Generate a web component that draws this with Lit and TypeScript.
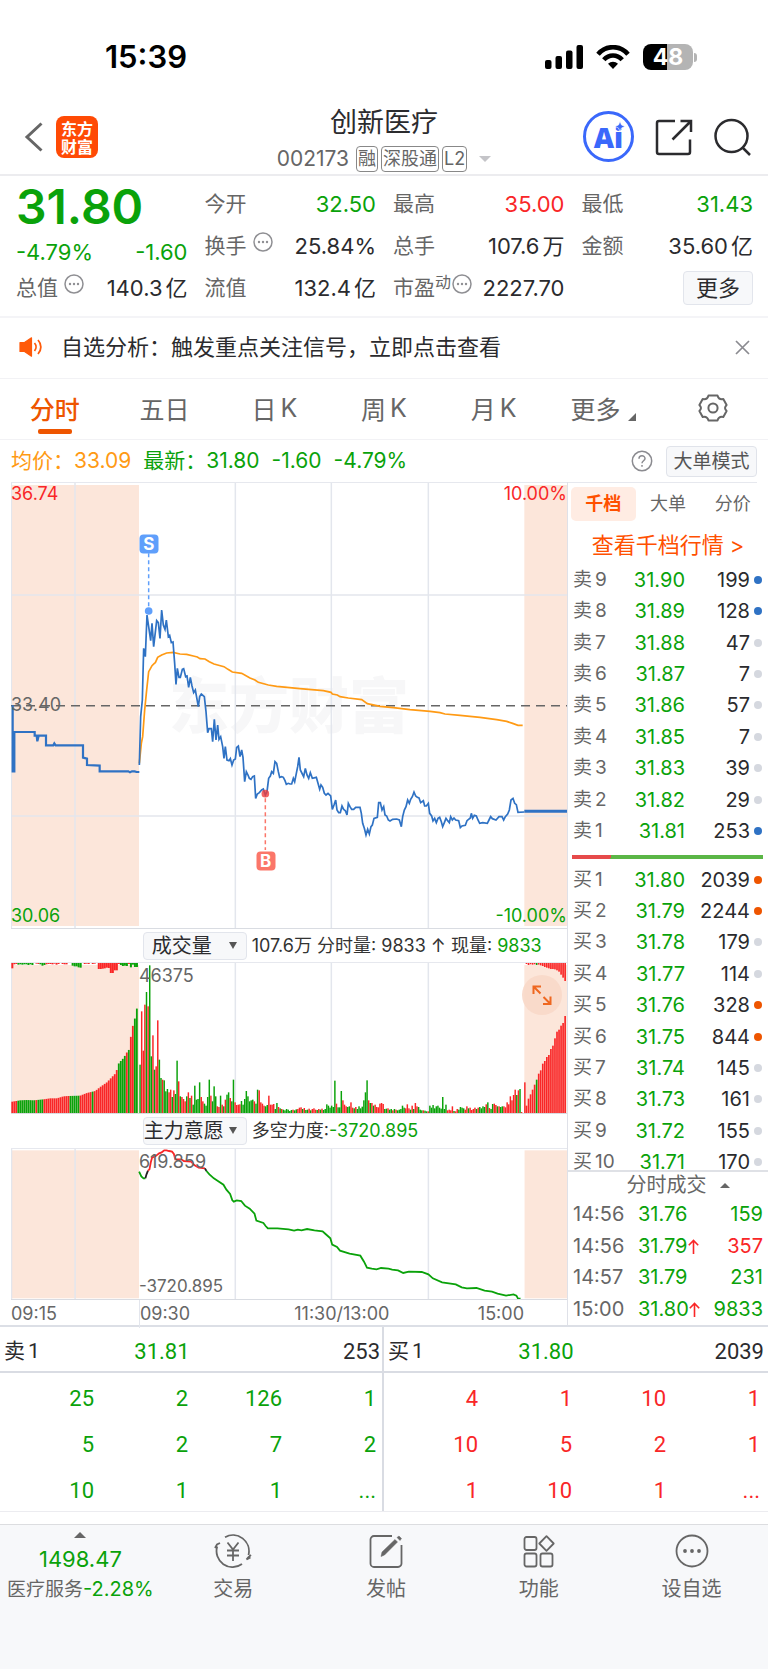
import { LitElement, html, svg, css } from "lit";
import { customElement, state } from "lit/decorators.js";

type Level = [string, string, number, string];

const ASKS: Level[] = [
  ["卖9", "31.90", 199, "blue"], ["卖8", "31.89", 128, "blue"], ["卖7", "31.88", 47, "gray"],
  ["卖6", "31.87", 7, "gray"], ["卖5", "31.86", 57, "gray"], ["卖4", "31.85", 7, "gray"],
  ["卖3", "31.83", 39, "gray"], ["卖2", "31.82", 29, "gray"], ["卖1", "31.81", 253, "blue"],
];
const BIDS: Level[] = [
  ["买1", "31.80", 2039, "orange"], ["买2", "31.79", 2244, "orange"], ["买3", "31.78", 179, "gray"],
  ["买4", "31.77", 114, "gray"], ["买5", "31.76", 328, "orange"], ["买6", "31.75", 844, "orange"],
  ["买7", "31.74", 145, "gray"], ["买8", "31.73", 161, "gray"], ["买9", "31.72", 155, "gray"],
  ["买10", "31.71", 170, "gray"],
];
const TRADES: [string, string, boolean, string, string][] = [
  ["14:56", "31.76", false, "159", "green"],
  ["14:56", "31.79", true, "357", "red"],
  ["14:57", "31.79", false, "231", "green"],
  ["15:00", "31.80", true, "9833", "green"],
];

/* Price series, three units per pixel */
const PRE_PRICE =
  "38,706 38,904 43,904 43,786 104,786 104,797 110,797 112,814 116,797 138,797 138,826 160,826 163,820 167,826 249,826 249,863 261,866 261,885 299,887 299,904 385,904 390,907 396,904 404,904 410,906 418,906";
const PRICE =
  "418,885 422,740 427,690 431,535 436,560 441,435 446,470 452,512 456,460 461,530 470,452 475,458 480,505 485,420 490,465 495,478 499,450 505,500 509,496 514,518 519,516 524,580 528,643 532,595 537,622 541,622 547,598 551,596 557,620 561,618 566,652 571,622 576,648 581,668 586,660 595,710 599,680 604,672 613,680 618,725 623,788 627,776 634,776 638,815 643,748 648,810 653,765 657,808 662,800 668,830 672,865 676,830 681,870 687,872 691,866 696,885 701,870 706,867 710,832 715,828 720,860 725,840 729,862 734,935 739,905 744,915 748,925 753,928 758,920 763,918 767,985 772,972 778,968 785,960 790,957 796,975 801,965 806,925 811,918 815,905 820,910 825,875 830,880 835,905 839,922 845,920 850,922 855,932 859,943 865,940 870,942 875,942 880,925 884,935 889,910 893,890 897,862 901,900 907,912 911,920 916,895 921,915 926,925 931,908 937,925 949,922 954,940 959,958 963,945 968,952 973,970 978,975 984,970 992,978 997,1018 1002,1005 1007,990 1011,1020 1016,1028 1021,1028 1026,1008 1031,1018 1036,1022 1041,1035 1045,1000 1050,1010 1055,1018 1061,1018 1067,1012 1080,1012 1084,1030 1088,1060 1093,1075 1098,1095 1103,1078 1108,1092 1113,1070 1117,1065 1122,1045 1132,1042 1136,998 1141,998 1146,1020 1151,1010 1155,1035 1160,1038 1165,1050 1170,1053 1178,1048 1190,1047 1198,1050 1204,1070 1208,1040 1213,1020 1218,1010 1223,990 1228,1000 1232,988 1237,980 1242,966 1247,978 1252,982 1257,984 1262,998 1270,992 1274,1008 1279,1008 1285,1000 1289,1030 1295,1038 1299,1053 1304,1045 1309,1058 1314,1045 1319,1042 1324,1055 1328,1070 1333,1058 1338,1045 1343,1052 1348,1058 1352,1040 1357,1050 1362,1044 1367,1050 1376,1052 1381,1073 1386,1068 1396,1066 1401,1052 1411,1044 1414,1030 1418,1045 1423,1036 1429,1038 1434,1050 1439,1060 1448,1058 1462,1060 1467,1050 1472,1040 1477,1046 1488,1050 1497,1040 1506,1040 1511,1050 1516,1040 1523,1032 1528,1020 1533,990 1539,985 1544,1000 1549,1004 1554,1027 1573,1026";
const AVERAGE =
  "418,880 424,820 428,800 434,720 440,660 446,605 450,598 456,587 463,580 466,578 473,562 485,555 500,549 519,547 540,552 560,553 580,558 592,561 600,566 615,567 628,575 642,582 672,590 684,598 697,606 725,610 750,624 765,630 775,637 805,645 830,649 900,656 970,662 993,667 997,672 1012,675 1020,680 1045,684 1085,689 1102,701 1140,709 1180,713 1230,719 1290,724 1320,728 1335,732 1380,736 1440,742 1490,749 1520,754 1540,761 1554,766 1568,766";

const VOLUME = `g145 r305 r187 r325 g363 r320 g443 g170 r233 g130 r140 r278 g160 g105 r100 g98 g65 g72 r62 r70
g48 r68 g57 g157 r95 g50 r48 r42 r35 g50 r62 g45 r52 g25 g82 g40 g42 g92 r48 r35
g28 g22 g48 g100 r52 g35 g80 g50 r20 r18 g52 r25 g20 r40 g55 g62 r45 g35 g100 r32
r24 r25 r26 g36 g25 g42 g66 g50 g35 g38 g40 r35 g28 g70 r68 r32 r28 r22 g20 g24
r52 r25 r25 r27 g12 g30 r18 g14 r12 g10 g8 g12 g10 g6 g9 r10 g8 g11 r12 r16
r17 g12 r15 g9 g10 r13 g8 r12 r14 r10 g9 r12 g10 r13 g9 g12 g26 g22 g16 g22
g18 g97 r28 g17 g17 g66 r38 r25 r20 g18 g20 r32 r16 g14 r18 g12 g20 g14 g19 g38
g62 g98 r38 g30 r30 g22 r25 r18 r17 r28 r30 r27 g12 g13 r14 g10 g12 r8 g12 r10
g8 g10 g12 g22 g16 r14 r26 r14 g10 r22 g12 r30 r20 g18 g10 g8 r8 g7 g5 r5
g22 g16 g24 g14 g20 g22 g16 g13 g48 g12 g25 r8 r10 r8 r20 g6 r5 r12 g10 g18
g16 g14 r10 r20 g14 r16 r9 r12 r16 g12 r16 g18 g14 g20 g18 r26 g32 r15 g12 g27
r28 r24 g20 r20 g18 g20 r20 r17 r32 r26 r50 r38 r54 r70 g54 r68 g72 r3 r0 r92`
  .split(/\s+/);

/* Opening auction: [x, height] knots, bar heights are interpolated between them */
const AUCTION: [number, number][] = [
  [36, 34], [60, 38], [80, 39], [100, 38], [130, 41], [150, 44], [170, 44], [190, 50], [205, 51],
  [240, 52], [260, 60], [285, 66], [300, 78], [320, 92], [345, 118], [350, 130], [356, 150],
  [370, 165], [380, 182], [388, 192], [394, 250], [400, 268], [406, 292], [412, 325],
];
const AUCTION_GREEN: [number, number][] = [[52, 104], [112, 130], [188, 193], [210, 242], [276, 280], [356, 378], [386, 390], [399, 420]];
const AUCTION_TOP = "r16 r4 r3 g5 g4 g5 g4 g4 g6 g4 g6 g0 r2 r3 g4 g8 g6 r4 r3 r3 r4 r2 r5 r3 r0 r3 r4 r4 r0 g0 g8 g10 g10 g13 g14 r0 r3 r2 r3 r0 r3 r2 r0 r18 r18 r17 r16 r14 r15 r30 r30 r22 r22 r3 g6 g9 g8 g9 r3 g13 g5 g12 g12 g18".split(" ");
const CLOSING = [22, 43, 56, 70, 85, 100, 118, 128, 148, 156, 168, 174, 192, 202, 224, 244, 250, 262, 270, 291];
const CLOSING_TOP = [3, 6, 4, 5, 4, 6, 5, 7, 9, 12, 14, 16, 18, 18, 19, 22, 26, 35, 44, 54];

const RED = "#f92627";
const GREEN = "#0aa20a";

function auctionHeight(x: number): number {
  for (let i = 1; i < AUCTION.length; i++) {
    const [x0, h0] = AUCTION[i - 1];
    const [x1, h1] = AUCTION[i];
    if (x <= x1) return h0 + ((h1 - h0) * (x - x0)) / (x1 - x0);
  }
  return AUCTION[AUCTION.length - 1][1];
}

@customElement("quote-dots")
export class QuoteDots extends LitElement {
  static styles = css`
    :host { display: inline-flex; }
    svg { width: 20px; height: 20px; }
  `;
  render() {
    return html`<svg viewBox="0 0 20 20" fill="none" stroke="#8f8f93" stroke-width="1.5">
      <circle cx="10" cy="10" r="9"></circle>
      <g fill="#8f8f93" stroke="none"><circle cx="6" cy="10" r="1.2"></circle><circle cx="10" cy="10" r="1.2"></circle><circle cx="14" cy="10" r="1.2"></circle></g>
    </svg>`;
  }
}

@customElement("order-book")
export class OrderBook extends LitElement {
  static styles = css`
    :host { display: flex; flex-direction: column; box-sizing: border-box; border-left: 1px solid #dfe1e8; min-width: 0; }
    button, a { font: inherit; color: inherit; border: 0; background: none; padding: 0; text-decoration: none; }
    .tabs { display: grid; grid-template-columns: repeat(3, 1fr); padding: 5px 3px 0 3px; background: linear-gradient(#e6e8ee, #e6e8ee) 0 0 / calc(100% - 11px) 1px no-repeat; }
    .tab { height: 34px; font-size: 18px; line-height: 32px; color: #666; border-radius: 5px; text-align: center; }
    .tab.on { background: #ffece3; color: #ff5000; font-weight: 600; }
    .more { display: block; text-align: center; font-size: 22px; line-height: 38px; padding: 5px 0 0; color: #ff5000; white-space: nowrap; }
    table { width: 100%; border-collapse: collapse; font-size: 20px; line-height: 24px; table-layout: fixed; }
    td, th { padding: 0; font-weight: 400; white-space: nowrap; }
    th { text-align: left; color: #666; padding-left: 5px; width: 46px; }
    th span { margin-left: 3px; }
    .book { line-height: 18px; }
    .book th { font-size: 19px; }
    .price { text-align: right; color: #0aa20a; width: 66px; }
    .amount { text-align: right; color: #2b2b2e; }
    .mark { width: 18px; }
    .dot { display: block; width: 8px; height: 8px; border-radius: 50%; margin-left: 4px; }
    .blue { background: #2f72c4; }
    .gray { background: #d5d8df; }
    .orange { background: #ee5500; }
    .asks { height: 283px; }
    .bids { height: 314px; }
    .clip { flex: 1 1 0; height: 0; overflow: hidden; border-bottom: 2px solid #dfe1e6; }
    .ratio { display: flex; height: 4px; margin: 8px 5px 5px 4px; background: #5bb646; }
    .ratio .buy { background: linear-gradient(135deg, #e64a4a 96%, #5bb646 96%); }
    .deals { display: flex; align-items: center; justify-content: center; gap: 13px; font-size: 20px; line-height: 26px; color: #666; padding-left: 20px; }
    .up { border: 5px solid transparent; border-top: 0; border-bottom-color: #666; }
    .trades { height: 127px; }
    .trades th { width: 60px; }
    .trades .price { text-align: left; width: 70px; padding-left: 5px; }
    .trades .amount { padding-right: 5px; }
    .trades .green { color: #0aa20a; }
    .trades .red { color: #f92627; }
    .arrow { width: 11px; height: 15px; vertical-align: -1px; }
  `;

  private rows(levels: Level[]) {
    return levels.map(([name, price, amount, tone]) => html`<tr>
      <th scope="row">${name.slice(0, 1)}<span>${name.slice(1)}</span></th>
      <td class="price">${price}</td>
      <td class="amount">${amount}</td>
      <td class="mark"><span class="dot ${tone}"></span></td>
    </tr>`);
  }

  render() {
    return html`
      <div class="tabs">
        <button class="tab on">千档</button><button class="tab">大单</button><button class="tab">分价</button>
      </div>
      <a class="more" href="#">查看千档行情 &gt;</a>
      <table class="book asks">${this.rows(ASKS)}</table>
      <div class="ratio"><span class="buy" style="width:20.5%"></span></div>
      <div class="clip"><table class="book bids">${this.rows(BIDS)}</table></div>
      <button class="deals">分时成交 <span class="up"></span></button>
      <table class="trades">
        ${TRADES.map(([time, price, up, amount, tone]) => html`<tr>
          <th scope="row">${time}</th>
          <td class="price">${price}${up ? html`<svg class="arrow" viewBox="0 0 11 15" fill="none" stroke="#f92627" stroke-width="1.6"><path d="M5.5 15V1.5M.8 6.2 5.5 1.4l4.7 4.8"></path></svg>` : ""}</td>
          <td class="amount ${tone}">${amount}</td>
        </tr>`)}
      </table>`;
  }
}

@customElement("intraday-charts")
export class IntradayCharts extends LitElement {
  static styles = css`
    :host { display: block; min-width: 0; }
    .plot { position: relative; border-top: 1px solid #e6e8ee; border-bottom: 1px solid #d9dce2; }
    svg.canvas { display: block; width: 100%; }
    .tall { height: 445px; }
    .short { height: 150px; }
    .canvas * { vector-effect: non-scaling-stroke; }
    .grid { stroke: #e3e6ed; stroke-width: 1.5; fill: none; }
    .tag { position: absolute; font-size: 18px; line-height: 20px; color: #666; }
    .tl { top: 1px; left: 0; }
    .tr { top: 1px; right: 0; }
    .bl { bottom: 2px; left: 0; }
    .br { bottom: 2px; right: 0; }
    .mid { top: 50%; left: 0; margin-top: -11px; }
    .tag.red { color: #f92627; }
    .tag.green, .green { color: #0aa20a; }
    .open-top { top: 3px; left: 23%; }
    .open-bottom { bottom: 3px; left: 23%; font-size: 17px; }
    .watermark { position: absolute; left: 28%; right: 28%; top: 50%; margin-top: -44px; text-align: center; font: 900 60px/80px "Noto Sans CJK SC", sans-serif; color: #f7f7f8; white-space: nowrap; }
    .watermark + svg { position: relative; }
    .signal { position: absolute; width: 19px; height: 19px; border-radius: 4px; color: #fff; font-size: 17px; font-weight: 700; line-height: 19px; text-align: center; transform: translate(-50%, -50%); }
    .sell { left: 24.8%; top: 13.6%; background: #5f9ffb; }
    .buy { left: 45.8%; top: 84.9%; background: #fb7669; }
    .bar { display: flex; align-items: center; gap: 5px; padding-left: 23.7%; font-size: 18px; line-height: 24px; color: #333; white-space: nowrap; }
    .first { height: 33px; }
    .second { height: 34px; }
    .pick { position: relative; width: 104px; flex: none; box-sizing: border-box; border: 1px solid #e2e5ec; border-radius: 4px; background: #f7f8fa; height: 28px; }
    .pick::after { content: ""; position: absolute; right: 9px; top: 9px; border: 4px solid transparent; border-top: 7px solid #555; border-bottom: 0; pointer-events: none; }
    select { appearance: none; border: 0; background: none; font: inherit; font-size: 20px; line-height: 26px; height: 26px; width: 100%; padding: 0 0 0 8px; color: #2b2b2e; }
    .second select { padding-left: 0; }
    .expand { position: absolute; right: 5px; top: 12px; width: 40px; height: 40px; border: 0; border-radius: 50%; padding: 0; background: #f9d9c9; opacity: .9; }
    .expand svg { display: block; width: 40px; height: 40px; }
    .axis { display: grid; grid-template-columns: 23% 1fr auto; height: 25px; font-size: 18px; line-height: 28px; color: #666; position: relative; }
    .axis .nine { border-left: 1px solid #e3e6ed; box-sizing: border-box; }
    .noon { position: absolute; left: 0; width: 119%; text-align: center; }
    .close { padding-right: 43px; }
  `;

  private grid(top: number, height: number) {
    return svg`
      <rect x="33" y=${top} width="384" height=${height} fill="#fce6da"></rect>
      <rect x="1573" y=${top} width="128" height=${height} fill="#fce6da"></rect>
      <path class="grid" d="M34 0V1400M225 0V1400M706 0V1400M994 0V1400M1285 0V1400"></path>`;
  }

  private bars() {
    const out = [];
    for (let i = 0; i < 63; i++) {
      const x = 34 + 6.03 * i;
      const h = auctionHeight(x + 2);
      const green = AUCTION_GREEN.some(([a, b]) => x + 3 >= a && x + 3 <= b);
      out.push(svg`<rect x=${x} y=${579 - h} width="5.4" height=${h} fill=${green ? GREEN : RED}></rect>`);
      const t = AUCTION_TOP[i];
      out.push(svg`<rect x=${x} y="129" width="6" height=${t.slice(1)} fill=${t[0] === "g" ? GREEN : RED}></rect>`);
    }
    VOLUME.forEach((v, i) => {
      const h = Number(v.slice(1));
      out.push(svg`<rect x=${418 + 4.83 * i} y=${579 - h} width="4.4" height=${h} fill=${v[0] === "g" ? GREEN : RED}></rect>`);
    });
    CLOSING.forEach((h, i) => {
      const x = 1577 + 6.1 * i;
      out.push(svg`<rect x=${x} y=${579 - h} width="5" height=${h} fill=${i === 5 ? GREEN : RED}></rect>
        <rect x=${x} y="129" width="5" height=${CLOSING_TOP[i]} fill=${i === 5 ? GREEN : RED}></rect>`);
    });
    return out;
  }

  render() {
    return html`
      <div class="plot">
        <div class="watermark">东方财富</div>
        <svg class="canvas tall" viewBox="33 39 1668 1335" preserveAspectRatio="none">
          ${this.grid(45, 1323)}
          <path class="grid" d="M33 375H1701M33 1038H1701"></path>
          <path d="M33 707H1701" stroke="#666" stroke-width="1.5" stroke-dasharray="9 6" fill="none"></path>
          <polyline points=${AVERAGE} fill="none" stroke="#ff9a14" stroke-width="1.7"></polyline>
          <polyline points=${PRE_PRICE} fill="none" stroke="#2f72c4" stroke-width="2.2"></polyline>
          <polyline points=${PRICE} fill="none" stroke="#2f72c4" stroke-width="1.7"></polyline>
          <path d="M1573 1024H1701" stroke="#2f72c4" stroke-width="3"></path>
          <path d="M446 250V410" stroke="#5f9ffb" stroke-width="1.5" stroke-dasharray="4 3"></path>
          <circle cx="446" cy="423" r="11.5" fill="#5f9ffb"></circle>
          <path d="M796 985V1140" stroke="#fb7669" stroke-width="1.5" stroke-dasharray="4 3"></path>
          <circle cx="796" cy="971" r="11.5" fill="#f03c3c" opacity=".8"></circle>
        </svg>
        <span class="tag tl red">36.74</span>
        <span class="tag tr red">10.00%</span>
        <span class="tag mid">33.40</span>
        <span class="tag bl green">30.06</span>
        <span class="tag br green">-10.00%</span>
        <span class="signal sell">S</span>
        <span class="signal buy">B</span>
      </div>
      <div class="bar first">
        <span class="pick"><select aria-label="指标一"><option>成交量</option></select></span>
        <span>107.6万 分时量: 9833 ↑ 现量: <span class="green">9833</span></span>
      </div>
      <div class="plot">
        <svg class="canvas short" viewBox="33 129 1668 450" preserveAspectRatio="none">
          ${this.grid(135, 444)}
          ${this.bars()}
        </svg>
        <span class="tag open-top">46375</span>
        <button class="expand" aria-label="全屏">
          <svg viewBox="0 0 40 40" fill="none" stroke="#ee5a0c" stroke-width="2"><path d="M11.5 19v-7.5H19M12 12l6.5 6.5M28.5 21.5V29H21M28 28.5l-6.5-6.5"></path></svg>
        </button>
      </div>
      <div class="bar second">
        <span class="pick"><select aria-label="指标二"><option>主力意愿</option></select></span>
        <span>多空力度:<span class="green">-3720.895</span></span>
      </div>
      <div class="plot">
        <svg class="canvas short" viewBox="29.7 102 1503 450" preserveAspectRatio="none" fill="none" stroke-width="1.8">
          <rect x="29.7" y="106" width="346" height="444" fill="#fce6da"></rect>
          <rect x="1418" y="106" width="116" height="444" fill="#fce6da"></rect>
          <path class="grid" d="M31 0V600M203 0V600M636 0V600M896 0V600M1158 0V600"></path>
          <polyline stroke=${GREEN} points="376,170 382,184 388,190 393,190"></polyline>
          <polyline stroke="#222" points="393,190 396,178 400,167"></polyline>
          <polyline stroke=${RED} points="400,167 404,163 408,140 411,128 420,124 430,115 437,112 444,106 450,106 457,108 465,110 470,117 474,133 490,133 497,138 517,140 525,150 537,158 554,160"></polyline>
          <polyline stroke="#222" points="554,160 558,168"></polyline>
          <polyline stroke=${GREEN} points="558,168 566,178 578,190 588,197 604,209 612,224 622,237 628,256 632,260 640,256 652,258 662,272 675,281 688,296 693,317 712,324 718,333 724,340 750,340 780,343 795,347 805,344 815,346 830,342 850,346 872,349 880,357 893,370 898,389 911,396 919,407 945,416 974,422 984,440 992,458 1005,461 1018,463 1030,459 1050,461 1060,464 1076,466 1090,474 1105,470 1140,471 1158,478 1170,490 1195,502 1232,508 1248,517 1262,520 1288,519 1310,527 1330,530 1345,536 1368,542 1388,538 1396,542 1400,550 1407,551"></polyline>
        </svg>
        <span class="tag open-top">619.859</span>
        <span class="tag open-bottom">-3720.895</span>
      </div>
      <div class="axis">
        <span>09:15</span><span class="nine">09:30</span><span class="close">15:00</span>
        <span class="noon">11:30/13:00</span>
      </div>`;
  }
}

@customElement("app-root")
export class AppRoot extends LitElement {
  @state() private bannerOpen = true;

  static styles = css`
    :host { display: flex; flex-direction: column; min-height: 100vh; background: #fff; color: #2b2b2e; font-family: Inter, "Noto Sans CJK SC", sans-serif; }
    button, a { font: inherit; color: inherit; border: 0; background: none; padding: 0; text-decoration: none; }
    .grow { flex: 1; }
    .green { color: #0aa20a; }
    .red { color: #f92627; }

    .status { height: 94px; box-sizing: border-box; padding: 20px 71px 0 105px; display: flex; align-items: center; justify-content: space-between; color: #000; }
    .clock { font-size: 31px; font-weight: 600; line-height: 40px; }
    .signals { display: flex; align-items: center; gap: 13px; }
    .battery { display: flex; align-items: center; gap: 1px; }
    .cell { width: 50px; height: 26px; border-radius: 8px; background: linear-gradient(90deg, #000 48%, #b4b4b4 48%); color: #fff; font-size: 23px; font-weight: 700; line-height: 27px; text-align: center; }
    .nub { width: 3px; height: 9px; border-radius: 0 3px 3px 0; background: #b4b4b4; }

    header { display: grid; grid-template-columns: 1fr auto 1fr; padding: 13px 17px 2px; border-bottom: 2px solid #ececef; }
    .side { display: flex; align-items: center; padding-bottom: 6px; }
    .left { gap: 12px; padding-left: 7px; }
    .right { justify-content: flex-end; gap: 21px; }
    .brand { width: 42px; height: 42px; border-radius: 8px; background: #ff4a05; color: #fff; font: 700 16px/18px "Noto Sans CJK SC", sans-serif; display: grid; place-content: center; text-align: center; }
    .side svg { display: block; }
    .ai { position: relative; width: 51px; height: 51px; box-sizing: border-box; border: 3px solid #3a68fb; border-radius: 50%; color: #3a68fb; font: 900 28px/42px "Noto Sans", sans-serif; }
    .spark { position: absolute; right: 6px; top: 7px; }
    .name { margin: 0; font-size: 27px; font-weight: 400; line-height: 32px; text-align: center; }
    .code { display: flex; align-items: center; gap: 3px; margin-top: 7px; font-size: 21px; line-height: 26px; color: #666; white-space: nowrap; }
    .chip { box-sizing: border-box; height: 26px; border: 1px solid #888; border-radius: 4px; padding: 0 1px; font-size: 18px; line-height: 24px; }
    .chips { display: flex; gap: 3px; margin-left: 4px; }
    .down { border: 6px solid transparent; border-top-color: #c4c4c8; border-bottom: 0; margin-left: 9px; }

    .quote { display: grid; grid-template-columns: repeat(4, 1fr); gap: 17px; padding: 7px 15px 7px 16px; border-bottom: 2px solid #f4f4f7; }
    .last { font-size: 48px; font-weight: 600; line-height: 48px; margin-bottom: 3px; }
    .pair { display: flex; align-items: center; justify-content: space-between; font-size: 22px; line-height: 42px; height: 42px; white-space: nowrap; }
    .first .pair { height: 36px; line-height: 36px; }
    .unit { margin-left: 3px; }
    .label { color: #666; display: flex; align-items: center; gap: 6px; font-size: 21px; }
    .label quote-dots { margin-bottom: 8px; }
    .label sup { font-size: 16px; line-height: 18px; margin: 0 -5px 12px -6px; }
    .more { width: 70px; height: 34px; margin-left: auto; box-sizing: border-box; border: 1px solid #e2e5ec; border-radius: 4px; background: #f7f8fa; line-height: 28px; }

    .banner { display: flex; align-items: center; gap: 18px; height: 61px; box-sizing: border-box; padding: 0 18px 2px 19px; border-bottom: 1px solid #f2f2f5; font-size: 22px; line-height: 30px; }
    .banner svg { display: block; }

    nav.periods { display: grid; grid-template-columns: repeat(7, 1fr); height: 61px; box-sizing: border-box; border-bottom: 1px solid #f2f2f5; font-size: 25px; color: #666; }
    .period { position: relative; display: flex; align-items: center; justify-content: center; gap: 8px; padding-bottom: 3px; white-space: nowrap; }
    .period i { font-style: normal; margin-left: -4px; }
    .period.on { color: #ee5500; font-weight: 500; }
    .period.on::after { content: ""; position: absolute; left: 50%; margin-left: -17px; bottom: 5px; width: 34px; height: 5px; border-radius: 2px; background: #ee5500; }
    .corner { align-self: flex-end; margin-bottom: 15px; border-left: 8px solid transparent; border-bottom: 8px solid #666; }

    .info { display: flex; align-items: center; gap: 13px; height: 42px; padding: 0 11px; font-size: 21px; white-space: nowrap; }
    .legend { display: flex; align-items: baseline; gap: 12px; flex: 1; line-height: 30px; }
    .amber { color: #ff9a14; }
    .mode { border: 1px solid #e0e3ea; border-radius: 4px; background: #f7f8fa; height: 31px; width: 91px; font-size: 19px; line-height: 27px; color: #555; box-sizing: border-box; }
    .info svg { display: block; }

    .board { display: grid; grid-template-columns: 1fr 201px; padding-left: 11px; border-bottom: 2px solid #dcdfe6; }

    .queues { display: grid; grid-template-columns: 1fr 1fr; border-bottom: 1px solid #ececf0; font-family: Roboto, "Noto Sans CJK SC", sans-serif; font-size: 22px; }
    .queue + .queue { border-left: 2px solid #d9dce3; margin-left: -2px; }
    .top { display: grid; grid-template-columns: 15fr 12fr 23fr; padding: 5px 4px 0; line-height: 39px; border-bottom: 2px solid #d9dce3; }
    .top .l { font-size: 21px; }
    .top .l span { margin-left: 3px; }
    .top .mid { text-align: center; }
    .top .end { text-align: right; }
    .queue table { width: 100%; border-collapse: collapse; table-layout: fixed; }
    .wrap { padding-right: 8px; }
    .queue td { box-sizing: border-box; padding: 4px 0 0; height: 46px; text-align: right; }

    nav.dock { flex: 1; display: grid; grid-template-columns: repeat(5, 1fr); align-content: start; margin-top: 12px; padding-left: 4px; min-height: 143px; border-top: 1px solid #dcdde0; background: #f7f8fa; color: #666; font-size: 20px; }
    .item { display: flex; flex-direction: column; align-items: center; padding-top: 9px; line-height: 30px; white-space: nowrap; }
    .item svg { display: block; margin-bottom: 6px; }
    .index { padding-top: 7px; font-size: 19px; }
    .index .value { font-size: 22px; margin-top: 6px; }
    .caret { border: 6px solid transparent; border-top: 0; border-bottom-color: #666; }
    .item .pct { font-size: 20px; }
  `;

  private pair(label: unknown, value: string, tone = "", unit = "") {
    return html`<div class="pair"><span class="label">${label}</span><span class=${tone}>${value}${unit ? html`<span class="unit">${unit}</span>` : ""}</span></div>`;
  }

  private queue(side: string, price: string, amount: string, tone: string, rows: string[][]) {
    return html`<section class="queue">
      <div class="top"><span class="l">${side}<span>1</span></span><span class="mid green">${price}</span><span class="end">${amount}</span></div>
      <div class="wrap"><table class=${tone}>${rows.map((r) => html`<tr>${r.map((c) => html`<td>${c}</td>`)}</tr>`)}</table></div>
    </section>`;
  }

  render() {
    return html`
      <div class="status">
        <span class="clock">15:39</span>
        <div class="signals">
          <svg width="38" height="24" viewBox="0 0 38 24"><rect x="0" y="15" width="6.5" height="9" rx="2"></rect><rect x="10.5" y="11" width="6.5" height="13" rx="2"></rect><rect x="21" y="5.5" width="6.5" height="18.5" rx="2"></rect><rect x="31.5" y="0" width="6.5" height="24" rx="2"></rect></svg>
          <svg width="34" height="24" viewBox="0 0 34 24" fill="none" stroke="#000" stroke-width="4.6"><path d="M2 9.2C10-.2 24-.2 32 9.2"></path><path d="M7.8 14.8c5.2-5.7 13.2-5.7 18.4 0"></path><path d="M17 24l-5-5.3c2.8-2.7 7.2-2.7 10 0z" fill="#000" stroke="none"></path></svg>
          <div class="battery"><span class="cell">48</span><span class="nub"></span></div>
        </div>
      </div>

      <header>
        <div class="side left">
          <button aria-label="返回"><svg width="20" height="30" viewBox="0 0 20 30" fill="none" stroke="#666" stroke-width="3"><path d="M17.5 1.5 3 15l14.5 13.5"></path></svg></button>
          <a class="brand" href="#"><span>东方<br>财富</span></a>
        </div>
        <div>
          <h1 class="name">创新医疗</h1>
          <div class="code">002173
            <span class="chips"><span class="chip">融</span><span class="chip">深股通</span><span class="chip">L2</span></span>
            <span class="down"></span>
          </div>
        </div>
        <div class="side right">
          <button class="ai">Ai<svg class="spark" width="10" height="11" viewBox="0 0 10 10" fill="#3a68fb" stroke="#fff" stroke-width=".6"><path d="M5 0l1.5 3.5L10 5 6.5 6.5 5 10 3.5 6.5 0 5l3.500-1.500z"></path></svg></button>
          <button aria-label="分享"><svg width="38" height="38" viewBox="0 0 38 38" fill="none" stroke="#2b2b2e" stroke-width="2.5"><path d="M20 3H4a2 2 0 0 0-2 2v29a2 2 0 0 0 2 2h29a2 2 0 0 0 2-2V21.5M17.5 21.5 35 4M25.5 3H36v11"></path></svg></button>
          <button aria-label="搜索"><svg width="37" height="38" viewBox="0 0 37 38" fill="none" stroke="#2b2b2e" stroke-width="2.5"><circle cx="17.5" cy="18" r="16"></circle><path d="M28.5 29.5 36 37"></path></svg></button>
        </div>
      </header>

      <section class="quote">
        <div class="first">
          <div class="last green">31.80</div>
          <div class="pair green"><span>-4.79%</span><span>-1.60</span></div>
          ${this.pair(html`总值<quote-dots></quote-dots>`, "140.3", "", "亿")}
        </div>
        <div>
          ${this.pair("今开", "32.50", "green")}
          ${this.pair(html`换手<quote-dots></quote-dots>`, "25.84%")}
          ${this.pair("流值", "132.4", "", "亿")}
        </div>
        <div>
          ${this.pair("最高", "35.00", "red")}
          ${this.pair("总手", "107.6", "", "万")}
          ${this.pair(html`市盈<sup>动</sup><quote-dots></quote-dots>`, "2227.70")}
        </div>
        <div>
          ${this.pair("最低", "31.43", "green")}
          ${this.pair("金额", "35.60", "", "亿")}
          <div class="pair"><button class="more">更多</button></div>
        </div>
      </section>

      ${this.bannerOpen ? html`<section class="banner">
        <svg width="24" height="20" viewBox="0 0 24 20" fill="none" stroke="#ff5a0a" stroke-width="1.8"><path d="M1 5.5h4.500L12.500.8v18.400L5.500 14.500H1z" fill="#ff5a0a" stroke="#ff5a0a" stroke-width="1.200" stroke-linejoin="round"></path><path d="M15.500 6c2 2.300 2 5.700 0 8M19 3c3.800 4 3.800 10 0 14"></path></svg>
        <span class="grow">自选分析：触发重点关注信号，立即点击查看</span>
        <button aria-label="关闭" @click=${() => (this.bannerOpen = false)}><svg width="15" height="15" viewBox="0 0 15 15" stroke="#8b8b90" stroke-width="1.7"><path d="M1 1l13 13M14 1 1 14"></path></svg></button>
      </section>` : ""}

      <nav class="periods">
        <button class="period on">分时</button><button class="period">五日</button><button class="period">日<i>K</i></button>
        <button class="period">周<i>K</i></button><button class="period">月<i>K</i></button>
        <button class="period">更多<span class="corner"></span></button>
        <button class="period" aria-label="设置"><svg width="30" height="28" viewBox="0 0 30 28" fill="none" stroke="#666" stroke-width="2"><path d="M10.5 1.5h9c.8 3 2.8 4.2 5.8 3.6L28.600 11c-2.100 2.200-2.100 4 0 6l-3.300 5.900c-3-.6-5 .6-5.800 3.600h-9c-.8-3-2.800-4.200-5.800-3.600L1.400 17c2.100-2 2.100-3.800 0-6l3.300-5.900c3 .6 5-.6 5.800-3.600z" stroke-linejoin="round"></path><circle cx="15" cy="14" r="4.6"></circle></svg></button>
      </nav>

      <div class="info">
        <div class="legend">
          <span class="amber">均价：33.09</span>
          <span class="green">最新：31.80</span><span class="green">-1.60</span><span class="green">-4.79%</span>
        </div>
        <button aria-label="帮助"><svg width="22" height="22" viewBox="0 0 22 22" fill="none" stroke="#8b8b90" stroke-width="1.5"><circle cx="11" cy="11" r="9.7"></circle><path d="M8 8.800c0-4 6-3.800 6-.3 0 2.300-3 2.300-3 4.800M11 15v1.800"></path></svg></button>
        <button class="mode">大单模式</button>
      </div>

      <main class="board">
        <intraday-charts></intraday-charts>
        <order-book></order-book>
      </main>

      <div class="queues">
        ${this.queue("卖", "31.81", "253", "green", [["25", "2", "126", "1"], ["5", "2", "7", "2"], ["10", "1", "1", "..."]])}
        ${this.queue("买", "31.80", "2039", "red", [["4", "1", "10", "1"], ["10", "5", "2", "1"], ["1", "10", "1", "..."]])}
      </div>

      <nav class="dock">
        <a class="item index" href="#"><span class="caret"></span><span class="green value">1498.47</span><span>医疗服务<span class="green pct">-2.28%</span></span></a>
        <a class="item" href="#"><svg width="38" height="34" viewBox="0 0 38 34" fill="none" stroke="#666" stroke-width="1.8"><path d="M11 3.300A16 16 0 0 1 34.500 21M3.200 12.500A16 16 0 0 0 28 30M1 14l2-3.500L6 9M37 21l-3 2.500-1.500 2M32.500 25.500l4-2M13.500 8.500l5.500 7 5.500-7M19 15.500V27M13 16.500h12M13 21.500h12"></path></svg>交易</a>
        <a class="item" href="#"><svg width="34" height="34" viewBox="0 0 34 34" fill="none" stroke="#666" stroke-width="1.8"><path d="M23 2H5a3.500 3.500 0 0 0-3.500 3.500v24A3.500 3.500 0 0 0 5 33h24a3.500 3.500 0 0 0 3.500-3.500V11"></path><path d="M12 22.500l1-4.500L26 5.500l2.500 2.500-13 13zM28 3.500l2-1.500L32.500 4.500 31 6.500z" fill="#666" stroke-width=".5"></path></svg>发帖</a>
        <a class="item" href="#"><svg width="32" height="34" viewBox="0 0 32 34" fill="none" stroke="#666" stroke-width="1.8"><rect x="1.5" y="3" width="12" height="13" rx="2"></rect><path d="M23.500 2.200 30.700 9.500l-7.200 7.300-7.200-7.300z" stroke-linejoin="round"></path><rect x="1.5" y="19.5" width="12" height="13" rx="2"></rect><rect x="17.5" y="19.5" width="12" height="13" rx="2"></rect></svg>功能</a>
        <a class="item" href="#"><svg width="34" height="34" viewBox="0 0 34 34" fill="none" stroke="#666" stroke-width="1.8"><circle cx="17" cy="17" r="15.5"></circle><g fill="#666" stroke="none"><circle cx="10" cy="17" r="1.9"></circle><circle cx="17" cy="17" r="1.9"></circle><circle cx="24" cy="17" r="1.9"></circle></g></svg>设自选</a>
      </nav>`;
  }
}
